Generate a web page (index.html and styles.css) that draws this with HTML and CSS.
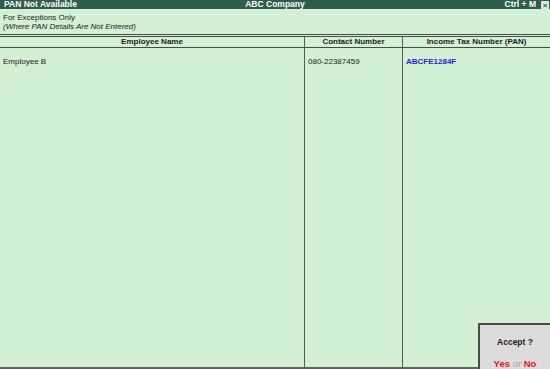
FILE: index.html
```html
<!DOCTYPE html>
<html lang="en">
  <head>
    <meta charset="UTF-8" />
    <title>PAN Not Available</title>
    <link rel="stylesheet" href="styles.css">
  </head>
  <body>
    <div class="screen">
      <div class="titlebar">
        <span class="title-left">PAN Not Available</span>
        <span class="title-center">ABC Company</span>
        <span class="title-right">Ctrl + M <span class="close">&#215;</span></span>
      </div>

      <div class="info">
        <p>For Exceptions Only</p>
        <p class="note">(Where PAN Details Are Not Entered)</p>
      </div>

      <div class="report">
        <div class="col col-name">
          <div class="col-head">Employee Name</div>
          <div class="cell">Employee B</div>
        </div>
        <div class="col col-contact">
          <div class="col-head">Contact Number</div>
          <div class="cell">080-22387459</div>
        </div>
        <div class="col col-pan">
          <div class="col-head">Income Tax Number (PAN)</div>
          <div class="cell pan">ABCFE1284F</div>
        </div>
      </div>

      <div class="accept">
        <div class="accept-title">Accept ?</div>
        <div class="accept-opts"><span class="opt">Yes</span> <span class="or">or</span> <span class="opt">No</span></div>
      </div>
    </div>
  </body>
</html>
```

FILE: styles.css
```css
* {
  margin: 0;
  padding: 0;
  box-sizing: border-box;
}

body {
  font-family: "Liberation Sans", Arial, sans-serif;
  font-size: 8px;
  color: #1a1a1a;
  background: #d4f0d4;
}

.screen {
  position: relative;
  width: 550px;
  height: 369px;
  display: flex;
  flex-direction: column;
  background: #d4f0d4;
  overflow: hidden;
}

.titlebar {
  height: 9px;
  background: #2d5e4c;
  color: #fff;
  font-weight: bold;
  font-size: 8.5px;
  display: flex;
  align-items: center;
  justify-content: space-between;
  padding: 0 1px 0 4px;
  line-height: 9px;
  position: relative;
}

.title-center {
  position: absolute;
  left: 0;
  right: 0;
  text-align: center;
}

.title-right {
  display: flex;
  align-items: center;
  gap: 5px;
}

.close {
  display: inline-block;
  width: 8px;
  height: 8px;
  line-height: 7px;
  text-align: center;
  background: #dfe8e0;
  color: #2d5e4c;
  font-size: 8px;
  border: 1px solid #dfe8e0;
}

.info {
  padding: 4px 3px 0;
  height: 25px;
  line-height: 9px;
}

.info .note {
  font-style: italic;
}

.report {
  flex: 1;
  display: flex;
  border-top: 3px double #3f4f45;
  border-bottom: 2px solid #59665d;
}

.col {
  display: flex;
  flex-direction: column;
}

.col-name {
  width: 305px;
  border-right: 1px solid #4f5f55;
}

.col-contact {
  width: 98px;
  border-right: 1px solid #4f5f55;
}

.col-pan {
  flex: 1;
}

.col-head {
  height: 11px;
  line-height: 10px;
  text-align: center;
  font-weight: bold;
  border-bottom: 1px solid #3f4f45;
}

.cell {
  padding: 9px 3px 0;
  line-height: 10px;
}

.pan {
  color: #2222e0;
  font-weight: bold;
}

.accept {
  position: absolute;
  right: 0;
  bottom: 0;
  width: 72px;
  height: 46px;
  background: #dcdcdc;
  border: 2px solid #4a4a4a;
  border-right: none;
  border-bottom: none;
  text-align: center;
}

.accept-title {
  font-weight: bold;
  font-size: 8.5px;
  margin-top: 12px;
}

.accept-opts {
  margin-top: 11px;
  font-weight: bold;
  font-size: 9.5px;
}

.opt {
  color: #ee1111;
}

.or {
  color: #a0a0a0;
  font-weight: normal;
}
```
